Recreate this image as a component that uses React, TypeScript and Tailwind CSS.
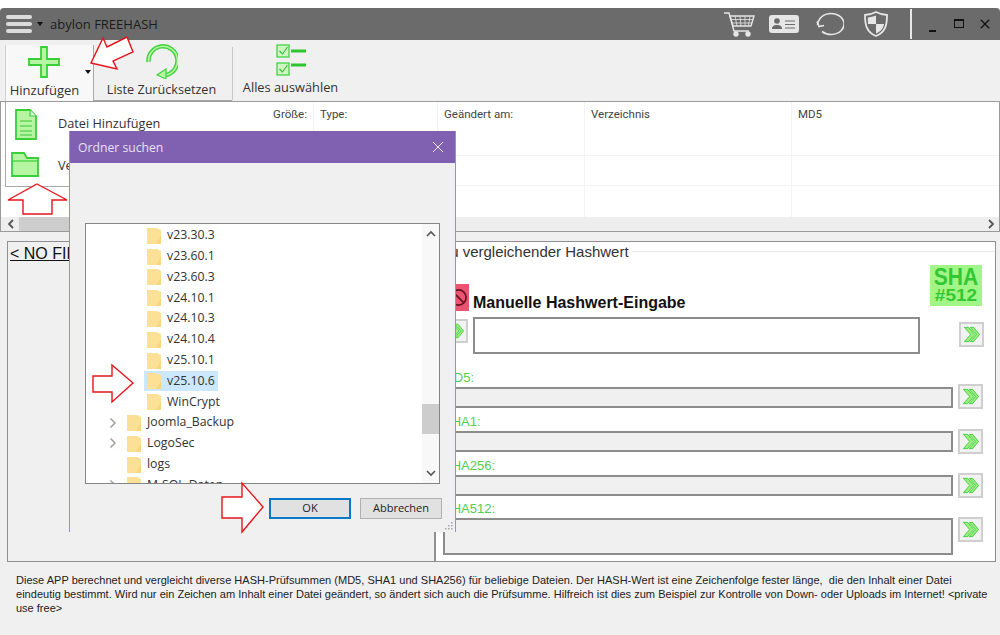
import React from "react";

const ui = "font-['Open_Sans',sans-serif]";
const roboto = "font-['Roboto',sans-serif]";
const arial = "font-['Liberation_Sans',sans-serif]";

function Chevrons() {
  return (
    <svg viewBox="0 0 25 25" className="w-full h-full">
      <path d="M4 4h5l7.500 8.500L9 21H4l7.500-8.500z" fill="#9bee7c" stroke="#3fce3f" strokeWidth="1.100" />
      <path d="M11 4h4l7 8.500L15 21h-4l7.500-8.500z" fill="#9bee7c" stroke="#3fce3f" strokeWidth="1.100" />
    </svg>
  );
}

function ArrowBtn({ className }: { className: string }) {
  return (
    <div className={"w-[25px] h-[25px] shrink-0 border-2 border-[#cfcfcf] bg-[#f2f2f2] " + className}>
      <Chevrons />
    </div>
  );
}

function Folder() {
  return (
    <svg viewBox="0 0 14 17" className="w-[14px] h-[17px] shrink-0">
      <path d="M0 1h10l4 2v14H0z" fill="#fbe096" />
      <path d="M14 9v8H9z" fill="#f7d67c" />
    </svg>
  );
}

function TreeRow({ label, level, chevron, selected }: { label: string; level: number; chevron?: boolean; selected?: boolean }) {
  return (
    <div className={"h-[20.8px] flex items-center shrink-0 " + (level === 2 ? "pl-[61px]" : "pl-[41px]")}>
      {chevron && (
        <svg viewBox="0 0 8 12" className="w-[8px] h-[12px] absolute left-[23px] text-[#a0a0a0]">
          <path d="M1.500 1.500L6 6l-4.500 4.500" fill="none" stroke="currentColor" strokeWidth="1.500" />
        </svg>
      )}
      <div className={"flex items-center gap-[6px] pr-[3px] h-[20px] -ml-[3px] pl-[3px] " + (selected ? "bg-[#cce8ff]" : "")}>
        <Folder />
        <span className={ui + " text-[12.3px] text-[#333] leading-none"}>{label}</span>
      </div>
    </div>
  );
}

function HashField({ label, heightClass, btnClass }: { label: string; heightClass: string; btnClass: string }) {
  return (
    <div className="relative">
      <div className={arial + " text-[13px] leading-[14px] text-[#4fcf4f] pl-[7px]"}>{label}</div>
      <div className={"mt-[2px] ml-[7px] w-[510px] border-2 border-[#8c8c8c] bg-[#f0f0f0] " + heightClass} />
      <ArrowBtn className={"absolute left-[522px] " + btnClass} />
    </div>
  );
}

export default function App() {
  const cols = "grid grid-cols-[313px_124px_147px_207px_1fr]";
  const cell = "border-r border-[#f3f3f3] last:border-r-0";
  return (
    <div className="relative w-[1000px] h-[635px] overflow-hidden bg-[#f0f0f0] flex flex-col">
      <div className="h-[8px] bg-white shrink-0" />
      {/* Title bar */}
      <div className="h-[32px] shrink-0 bg-[#6b6b6b] rounded-t-[4px] flex items-center pl-[6px] pr-[10px]">
        <div className="w-[26px] flex flex-col gap-[3px]">
          <div className="h-[4px] rounded-full bg-[#dcdcdc]" />
          <div className="h-[4px] rounded-full bg-[#dcdcdc]" />
          <div className="h-[4px] rounded-full bg-[#dcdcdc]" />
        </div>
        <div className="ml-[5px] w-0 h-0 border-x-[3px] border-x-transparent border-t-[4px] border-t-[#111]" />
        <span className={ui + " ml-[7px] mt-[2px] text-[13px] text-[#1c1c1c]"}>abylon FREEHASH</span>
        <div className="ml-auto flex items-center h-full">
          <svg viewBox="0 0 32 26" className="w-[32px] h-[26px] text-[#e6e6e6]" fill="none" stroke="currentColor" strokeWidth="1.400">
            <path d="M1 2h5l5 18h15" />
            <path d="M7 5h24l-3 10H10z" />
            <path d="M12 5l2 10M17 5l1 10M22 5l0 10M27 5l-1.500 10M8 8.500h22M9 12h20" strokeWidth="0.800" />
            <circle cx="13" cy="23" r="2" fill="currentColor" />
            <circle cx="25" cy="23" r="2" fill="currentColor" />
          </svg>
          <svg viewBox="0 0 30 18" className="ml-[14px] w-[30px] h-[18px]">
            <rect x="0" y="0" width="30" height="18" rx="3" fill="#e6e6e6" />
            <circle cx="8" cy="6" r="2.800" fill="#6b6b6b" />
            <path d="M3 14c0-3 2-4 5-4s5 1 5 4z" fill="#6b6b6b" />
            <path d="M16 6h10M16 9.500h10M16 13h10" stroke="#6b6b6b" strokeWidth="1.200" />
          </svg>
          <svg viewBox="0 0 28 24" className="ml-[17px] w-[28px] h-[24px] text-[#e6e6e6]" fill="none" stroke="currentColor" strokeWidth="1.600">
            <path d="M6 19.500A13 10.500 0 1 0 4 6.500C2.500 8.500 1.500 10.500 1.500 13" />
            <path d="M1 9.500l2 5 5-1" />
          </svg>
          <svg viewBox="0 0 26 26" className="ml-[19px] w-[26px] h-[26px]">
            <path d="M13 1c4 2 8 3 11 3 0 9-1 17-11 21C3 21 2 13 2 4c3 0 7-1 11-3z" fill="#6b6b6b" stroke="#e6e6e6" strokeWidth="1.800" />
            <path d="M13 4.500v8.500H5c-.2-2.500-.2-4.500-.2-6.500 2.500-.2 5.500-1 8.200-2z" fill="#e6e6e6" />
            <path d="M13 13h8c-.6 4-3 7.500-8 9.500z" fill="#e6e6e6" />
          </svg>
          <div className="ml-[21px] w-[2px] h-[30px] bg-[#e8e8e8]" />
          <div className="ml-[17px] w-[7px] h-[2px] mt-[14px] bg-[#111]" />
          <div className="ml-[18px] w-[10px] h-[9px] border border-[#111] border-t-[2px] -mt-[1px]" />
          <svg viewBox="0 0 10 10" className="ml-[16px] w-[10px] h-[10px] -mt-[1px]">
            <path d="M.8.8l8.400 8.400M9.200.8L.8 9.200" stroke="#111" strokeWidth="1.300" />
          </svg>
        </div>
      </div>
      {/* Toolbar */}
      <div className={ui + " h-[61px] shrink-0 flex pl-[5px] text-[#333]"}>
        <div className="relative w-[88px] mt-[5px] bg-[#f8f8f8] border-l border-[#d0d0d0] flex flex-col items-center">
          <svg viewBox="0 0 32 32" className="w-[32px] h-[32px] mt-[1px] mr-[12px]">
            <path d="M13 1h6v12h12v6H19v12h-6V19H1v-6h12z" fill="#b6f5a2" stroke="#38d038" strokeWidth="1.800" />
          </svg>
          <div className="absolute left-[79px] top-[25px] w-0 h-0 border-x-[3px] border-x-transparent border-t-[4px] border-t-[#111]" />
          <span className="text-[13px] leading-[18px] mt-[3px] mr-[10px]">Hinzufügen</span>
        </div>
        <div className="w-[139px] mt-[5px] border-l border-b border-[#a8a8a8] flex flex-col items-center relative">
          <svg viewBox="0 0 32 36" className="w-[32px] h-[36px] -mt-[2px] -ml-[2px]">
            <path d="M2.500 19A14.500 14.500 0 1 1 20 32" fill="none" stroke="#41d23f" strokeWidth="4.400" />
            <path d="M2.500 19A14.500 14.500 0 1 1 20 32" fill="none" stroke="#b6f5a2" strokeWidth="1.600" />
            <path d="M20 26l-9 6 9 4z" fill="#b6f5a2" stroke="#41d23f" strokeWidth="1.200" />
          </svg>
          <span className="text-[12.6px] leading-[18px] mt-[2px] -ml-[3px]">Liste Zurücksetzen</span>
        </div>
        <div className="w-px h-[53px] mt-[7px] bg-[#c8c8c8]" />
        <div className="w-[115px] flex flex-col items-center pt-[4px]">
          <svg viewBox="0 0 30 32" className="w-[30px] h-[32px]">
            <rect x="1" y="1" width="12" height="12" fill="#cdf7c0" stroke="#38d038" strokeWidth="1.200" />
            <path d="M3.500 7l3 3 5-7" fill="none" stroke="#38b838" strokeWidth="1.100" />
            <rect x="1" y="19" width="12" height="12" fill="#cdf7c0" stroke="#38d038" strokeWidth="1.200" />
            <path d="M3.500 25l3 3 5-7" fill="none" stroke="#38b838" strokeWidth="1.100" />
            <path d="M15 7h15M15 21h15" stroke="#2fc52f" strokeWidth="3" />
          </svg>
          <span className="text-[12.8px] leading-[18px] mt-[2px]">Alles auswählen</span>
        </div>
      </div>
      {/* Table */}
      <div className={roboto + " relative h-[131px] shrink-0 bg-white border border-[#9a9a9a] flex flex-col text-[#444] text-[11.5px]"}>
        <div className={cols + " h-[27px]"}>
          <div className={cell + " text-right pr-[6px] pt-[4px]"}>Größe:</div>
          <div className={cell + " pl-[6px] pt-[4px]"}>Type:</div>
          <div className={cell + " pl-[6px] pt-[4px]"}>Geändert am:</div>
          <div className={cell + " pl-[6px] pt-[4px]"}>Verzeichnis</div>
          <div className={cell + " pl-[6px] pt-[4px]"}>MD5</div>
        </div>
        <div className={cols + " h-[27px] border-b border-[#f3f3f3]"}>
          <div className={cell} /><div className={cell} /><div className={cell} /><div className={cell} /><div className={cell} />
        </div>
        <div className={cols + " h-[30px] border-b border-[#f3f3f3]"}>
          <div className={cell} /><div className={cell} /><div className={cell} /><div className={cell} /><div className={cell} />
        </div>
        <div className={cols + " flex-1"}>
          <div className={cell} /><div className={cell} /><div className={cell} /><div className={cell} /><div className={cell} />
        </div>
        <div className="h-[14px] bg-[#eeeeee] flex items-center shrink-0">
          <svg viewBox="0 0 8 10" className="ml-[6px] w-[8px] h-[10px]">
            <path d="M6 1L2 5l4 4" fill="none" stroke="#555" strokeWidth="1.800" />
          </svg>
          <div className="ml-[4px] w-[300px] h-full bg-[#cdcdcd]" />
          <svg viewBox="0 0 8 10" className="ml-auto mr-[4px] w-[8px] h-[10px]">
            <path d="M2 1l4 4-4 4" fill="none" stroke="#555" strokeWidth="1.800" />
          </svg>
        </div>
      </div>
      {/* Panels */}
      <div className="mt-[9px] h-[321px] shrink-0 flex pl-[7px] pr-[4px]">
        <div className="w-[428px] border border-[#8f8f8f]">
          <div className={arial + " h-[20px] ml-[2px] pt-[2px] text-[16px] leading-[20px] text-[#111] underline"}>{"< NO FILE SELECTED >"}</div>
        </div>
        <div className="relative flex-1 bg-white border border-[#8f8f8f]">
          <div className={arial + " absolute left-[5px] top-[1px] text-[15px] leading-[17px] text-[#333]"}>Zu vergleichender Hashwert</div>
          <div className="absolute left-[196px] right-[1px] top-[9px] h-px bg-[#e8e8e8]" />
          <div className="absolute left-[494px] top-[23px] w-[52px] h-[41px] bg-[#a2f587] flex flex-col items-center justify-center">
            <span className={arial + " text-[21px] leading-[21px] font-bold text-[#33c833] scale-y-[1.1]"}>SHA</span>
            <span className={arial + " text-[19px] leading-[18px] font-bold text-[#33c833] scale-y-90"}>#512</span>
          </div>
          <div className="absolute left-[12px] top-[42px] w-[21px] h-[27px] bg-[#ea5470] flex items-center justify-center">
            <svg viewBox="0 0 20 20" className="w-[19px] h-[19px]">
              <circle cx="10" cy="10" r="8" fill="none" stroke="#6a1424" strokeWidth="1.800" />
              <path d="M4.500 4.500l11 11" stroke="#6a1424" strokeWidth="1.800" />
            </svg>
          </div>
          <div className="pt-[53px] pl-[37px]">
            <div className={arial + " text-[16px] leading-[16px] font-bold text-[#111]"}>Manuelle Hashwert-Eingabe</div>
            <div className="relative mt-[6px] w-[447px] h-[37px] border-2 border-[#8c8c8c] bg-white">
              <ArrowBtn className="absolute -left-[31px] top-0 !w-[24px] !h-[24px]" />
              <ArrowBtn className="absolute left-[484px] top-[3px]" />
            </div>
          </div>
          <div className="mt-[17px] flex flex-col">
            <HashField label="MD5:" heightClass="h-[21px]" btnClass="top-[13px]" />
            <div className="h-[7px]" />
            <HashField label="SHA1:" heightClass="h-[21px]" btnClass="top-[14px]" />
            <div className="h-[7px]" />
            <HashField label="SHA256:" heightClass="h-[21px]" btnClass="top-[14px]" />
            <div className="h-[6px]" />
            <HashField label="SHA512:" heightClass="h-[37px]" btnClass="top-[15px]" />
          </div>
        </div>
      </div>
      {/* Footer */}
      <div className={arial + " pl-[16px] pt-[11px] text-[11px] leading-[14px] text-[#222] whitespace-pre"}>
        <div className="tracking-[0.02px]">Diese APP berechnet und vergleicht diverse HASH-Prüfsummen (MD5, SHA1 und SHA256) für beliebige Dateien. Der HASH-Wert ist eine Zeichenfolge fester länge,  die den Inhalt einer Datei</div>
        <div className="tracking-[0.02px]">eindeutig bestimmt. Wird nur ein Zeichen am Inhalt einer Datei geändert, so ändert sich auch die Prüfsumme. Hilfreich ist dies zum Beispiel zur Kontrolle von Down- oder Uploads im Internet! {"<private"}</div>
        <div>{"use free>"}</div>
      </div>

      {/* Dropdown menu */}
      <div className={ui + " absolute left-[5px] top-[102px] w-[250px] h-[85px] bg-white border-l border-b border-[#a8a8a8] text-[#333] text-[12.7px]"}>
        <div className="flex items-center h-[44px]">
          <svg viewBox="0 0 22 31" className="ml-[9px] w-[22px] h-[31px]">
            <path d="M1 1h14l6 6v23H1z" fill="#b6f5a2" stroke="#38d038" strokeWidth="1.800" />
            <path d="M15 1v6h6" fill="#e6fbdd" stroke="#38d038" strokeWidth="1.200" />
            <path d="M5 12h12M5 17h12M5 22h12M5 26h12" stroke="#38c838" strokeWidth="1.200" />
          </svg>
          <span className="ml-[21px]">Datei Hinzufügen</span>
        </div>
        <div className="flex items-center h-[40px]">
          <svg viewBox="0 0 28 25" className="ml-[5px] -mt-[3px] w-[28px] h-[25px]">
            <path d="M1 24V1h12l3 5h11v18z" fill="#b6f5a2" stroke="#38d038" strokeWidth="1.800" />
            <path d="M1 9h26" stroke="#38d038" strokeWidth="1.200" />
          </svg>
          <span className="ml-[19px]">Verzeichnis Hinzufügen</span>
        </div>
      </div>

      {/* Folder dialog */}
      <div className="absolute left-[69px] top-[131px] w-[387px] h-[401px] bg-[#f0f0f0] border-x border-[#9a90c0] flex flex-col">
        <div className="h-[32px] shrink-0 bg-[#8060b0] flex items-center justify-between pl-[8px] pr-[11px]">
          <span className={ui + " pt-[2px] text-[12.2px] text-[#e8e0f4]"}>Ordner suchen</span>
          <svg viewBox="0 0 12 12" className="w-[12px] h-[12px]">
            <path d="M1 1l10 10M11 1L1 11" stroke="#ece6f6" strokeWidth="1" />
          </svg>
        </div>
        <div className="relative mt-[60px] ml-[15px] w-[355px] h-[261px] shrink-0 bg-white border border-[#858585] flex overflow-hidden">
          <div className="flex-1 flex flex-col pt-px">
            <TreeRow label="v23.30.3" level={2} />
            <TreeRow label="v23.60.1" level={2} />
            <TreeRow label="v23.60.3" level={2} />
            <TreeRow label="v24.10.1" level={2} />
            <TreeRow label="v24.10.3" level={2} />
            <TreeRow label="v24.10.4" level={2} />
            <TreeRow label="v25.10.1" level={2} />
            <TreeRow label="v25.10.6" level={2} selected />
            <TreeRow label="WinCrypt" level={2} />
            <TreeRow label="Joomla_Backup" level={1} chevron />
            <TreeRow label="LogoSec" level={1} chevron />
            <TreeRow label="logs" level={1} />
            <TreeRow label="M-SQL-Daten" level={1} chevron />
          </div>
          <div className="w-[17px] shrink-0 bg-[#f8f8f8] flex flex-col items-center relative">
            <svg viewBox="0 0 10 8" className="mt-[6px] w-[10px] h-[8px]">
              <path d="M1 6l4-4 4 4" fill="none" stroke="#555" strokeWidth="1.600" />
            </svg>
            <div className="absolute top-[180px] left-0 w-full h-[30px] bg-[#cdcdcd]" />
            <svg viewBox="0 0 10 8" className="mt-auto mb-[6px] w-[10px] h-[8px]">
              <path d="M1 2l4 4 4-4" fill="none" stroke="#555" strokeWidth="1.600" />
            </svg>
          </div>
        </div>
        <div className={ui + " mt-[14px] flex pl-[199px] gap-[9px] text-[11px] text-[#222]"}>
          <div className="w-[82px] h-[21px] bg-[#e1e1e1] border-2 border-[#0a78c8] flex items-center justify-center">OK</div>
          <div className="w-[82px] h-[21px] bg-[#e1e1e1] border border-[#b0b0b0] flex items-center justify-center">Abbrechen</div>
        </div>
        <svg viewBox="0 0 8 8" className="absolute right-[2px] bottom-[2px] w-[8px] h-[8px]" fill="#a8a8a8">
          <rect x="6" y="0" width="1.500" height="1.500" />
          <rect x="3" y="3" width="1.500" height="1.500" />
          <rect x="6" y="3" width="1.500" height="1.500" />
          <rect x="0" y="6" width="1.500" height="1.500" />
          <rect x="3" y="6" width="1.500" height="1.500" />
          <rect x="6" y="6" width="1.500" height="1.500" />
        </svg>
      </div>

      {/* Red annotation arrows */}
      <svg viewBox="0 0 1000 635" className="absolute inset-0 w-[1000px] h-[635px] pointer-events-none" fill="#ffffff" stroke="#e8141c" strokeWidth="1.400">
        <polygon points="91,63 117,69 113,61 133,52 127,37 107,47 103,38" />
        <polygon points="37,184 67,200 52,200 52,214 23,214 23,200 8,200" />
        <polygon points="133,383 112,365 112,376 93,376 93,392 112,392 112,402" />
        <polygon points="263,507 242,483 242,497 222,497 222,518 242,518 242,532" />
      </svg>
    </div>
  );
}
